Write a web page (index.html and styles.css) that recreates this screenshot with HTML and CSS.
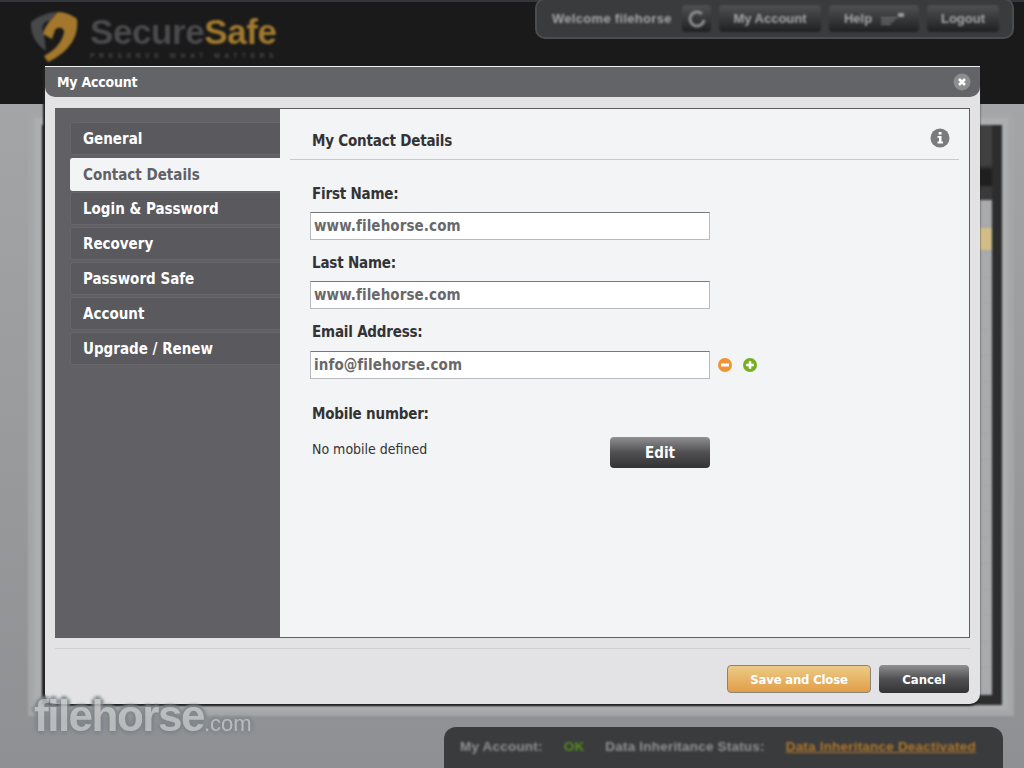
FILE: index.html
```html
<!DOCTYPE html>
<html>
<head>
    <meta charset="utf-8">
    <link rel="stylesheet" href="styles.css">
    <title>SecureSafe</title>
</head>
<body>
<!-- blurred app behind the dialog -->
<div class="app">
    <header class="top">
        <div class="logo">
            <svg class="logo-mark" width="52" height="54" viewBox="0 0 52 54">
                <path d="M3 13C12 6 22 3 30 3L22 12C14 12 13 20 16 26L18 42C9 36 2 26 3 13Z" fill="#47484a"/>
                <path d="M30 3C37 3 44 6 49 10C51 26 43 42 20 53L16 47C28 41 34 32 36 24C37 19 30 17 27 21L24 30L15 25C17 16 24 10 30 3Z" fill="#a4782c"/>
            </svg>
            <div>
                <div class="logo-name">Secure<span>Safe</span></div>
                <div class="logo-tag">PRESERVE WHAT MATTERS</div>
            </div>
        </div>
        <div class="usernav">
            <span class="welcome">Welcome filehorse</span>
            <span class="navbtn nav-refresh">
                <svg width="18" height="18" viewBox="0 0 18 18"><path d="M14 4A7 7 0 1 0 16 10" fill="none" stroke="#8b8c8c" stroke-width="3"/></svg>
            </span>
            <span class="navbtn nav-account">My Account</span>
            <span class="navbtn nav-help">Help
                <svg width="24" height="14" viewBox="0 0 24 14"><path d="M1 6H17M1 9H14M1 12H11" stroke="#77787a" stroke-width="1.4"/><path d="M18 1H24V5H18Z" fill="#9a9b9b"/></svg>
            </span>
            <span class="navbtn nav-logout">Logout</span>
        </div>
    </header>
    <div class="main">
        <div class="frame">
            <div class="frame-dark">
                <div class="frame-list">
                    <div class="frame-row"></div>
                </div>
            </div>
        </div>
    </div>
    <div class="statusbar">
        <span>My Account:</span>
        <span class="ok">OK</span>
        <span>Data Inheritance Status:</span>
        <span class="inherit">Data Inheritance Deactivated</span>
    </div>
</div>

<div class="dialog">
    <div class="dialog-title">
        <span>My Account</span>
        <svg class="close" width="18" height="18" viewBox="0 0 18 18">
            <circle cx="9" cy="9" r="8.5" fill="#8d8d8f"/>
            <path d="M6 6L12 12M12 6L6 12" stroke="#fff" stroke-width="2.6"/>
        </svg>
    </div>
    <div class="dialog-body">
        <nav class="tabs">
            <a class="tab">General</a>
            <a class="tab active">Contact Details</a>
            <a class="tab">Login &amp; Password</a>
            <a class="tab">Recovery</a>
            <a class="tab">Password Safe</a>
            <a class="tab">Account</a>
            <a class="tab">Upgrade / Renew</a>
        </nav>
        <section class="content">
            <div class="content-head">
                <h2>My Contact Details</h2>
                <svg class="info" width="20" height="20" viewBox="0 0 20 20">
                    <circle cx="10" cy="10" r="9.5" fill="#7b7b7d"/>
                    <rect x="8.7" y="4" width="2.8" height="2.6" fill="#fff"/>
                    <path d="M7.5 8H11.5V13.6H13V15.4H7.5V13.6H9V9.8H7.5Z" fill="#fff"/>
                </svg>
            </div>
            <div class="fields">
                <label class="field-label">First Name:</label>
                <input class="field" type="text" value="www.filehorse.com">
                <label class="field-label">Last Name:</label>
                <input class="field" type="text" value="www.filehorse.com">
                <label class="field-label">Email Address:</label>
                <div class="email-row">
                    <input class="field" type="text" value="info@filehorse.com">
                    <svg width="14" height="14" viewBox="0 0 14 14"><circle cx="7" cy="7" r="7" fill="#ee9433"/><rect x="3" y="5.5" width="8" height="3" fill="#fff"/></svg>
                    <svg width="14" height="14" viewBox="0 0 14 14"><circle cx="7" cy="7" r="7" fill="#76ae22"/><path d="M5.7 3.2H8.3V5.7H10.8V8.3H8.3V10.8H5.7V8.3H3.2V5.7H5.7Z" fill="#fff"/></svg>
                </div>
                <label class="field-label mobile-label">Mobile number:</label>
                <div class="mobile-row">
                    <span>No mobile defined</span>
                    <button class="btn btn-dark btn-edit">Edit</button>
                </div>
            </div>
        </section>
    </div>
    <div class="dialog-foot">
        <button class="btn btn-orange">Save and Close</button>
        <button class="btn btn-dark btn-cancel">Cancel</button>
    </div>
</div>

<div class="watermark">filehorse<span>.com</span></div>
</body>
</html>
```

FILE: styles.css
```css
html, body {
    margin: 0;
    height: 100%;
    overflow: hidden;
}

body {
    font-family: "DejaVu Sans", sans-serif;
    font-stretch: condensed;
    background: #919396;
    color: #333;
}

/* app behind the dialog */
.app {
    position: relative;
    width: 1024px;
    height: 768px;
    overflow: hidden;
    display: flex;
    flex-direction: column;
    background: linear-gradient(#a3a5a6 100px, #8e9093);
}

.top {
    height: 104px;
    flex: none;
    box-sizing: border-box;
    background: #1a1a1b;
    border-top: 2px solid #33373b;
    display: flex;
    justify-content: space-between;
    align-items: flex-start;
    padding-left: 28px;
    padding-right: 10px;
}

.logo {
    display: flex;
    gap: 10px;
    padding-top: 7px;
    filter: blur(1px);
}

.logo-name {
    font-family: "Liberation Sans", sans-serif;
    font-weight: bold;
    font-size: 35px;
    line-height: 30px;
    margin-top: 8px;
    color: #4b4b4e;
    letter-spacing: -.4px;
}

.logo-name span {
    color: #a27a2e;
}

.logo-tag {
    font-family: "Liberation Sans", sans-serif;
    font-size: 7px;
    font-weight: bold;
    letter-spacing: 4.4px;
    color: #47474a;
    margin-top: 5px;
    white-space: nowrap;
}

.usernav {
    margin-top: -4px;
    width: 479px;
    height: 41px;
    box-sizing: border-box;
    background: #3a3b3d;
    border: 2px solid #4a4c4e;
    border-radius: 10px;
    display: flex;
    align-items: center;
    padding-left: 15px;
    font-family: "Liberation Sans", sans-serif;
    font-weight: bold;
    font-size: 13px;
    color: #a6a7a7;
}

.usernav > * {
    filter: blur(1px);
}

.welcome {
    width: 130px;
    white-space: nowrap;
    letter-spacing: .3px;
}

.navbtn {
    height: 27px;
    display: flex;
    align-items: center;
    justify-content: center;
    gap: 8px;
    background: linear-gradient(#505152, #1f2021);
    border-radius: 4px;
    margin-right: 8px;
}

.nav-refresh { width: 29px; }
.nav-account { width: 102px; }
.nav-help { width: 90px; }
.nav-logout { width: 72px; }

.main {
    flex: 1;
    padding: 0 10px 0 28px;
}

.frame {
    height: 604px;
    margin-top: 8px;
    box-sizing: border-box;
    background: #adaeaf;
    border: 6px solid #a5a6a7;
    padding: 7px 6px 5px 8px;
    filter: blur(1px);
}

.frame-dark {
    height: 100%;
    box-sizing: border-box;
    background: linear-gradient(#404041 40px, #1f1f20 45px, #1f1f20 60px, #3a3a3b 62px, #2d2d2e);
    border-left: 4px solid #2d2d2e;
    border-right: 10px solid #2d2d2e;
    border-bottom: 10px solid #2d2d2e;
    padding-top: 75px;
}

.frame-list {
    height: 100%;
    padding-top: 28px;
    box-sizing: border-box;
    background: repeating-linear-gradient(#a9aaab 0, #a9aaab 25px, #a0a1a2 26px);
}

.frame-row {
    height: 22px;
    background: #d1bd85;
}

.statusbar {
    position: absolute;
    left: 444px;
    top: 727px;
    width: 559px;
    height: 45px;
    box-sizing: border-box;
    background: #3a3b3d;
    border-radius: 12px 12px 0 0;
    padding: 12px 0 0 16px;
    display: flex;
    gap: 21px;
    font-family: "Liberation Sans", sans-serif;
    font-weight: bold;
    font-size: 13.5px;
    letter-spacing: .2px;
    color: #909192;
}

.statusbar span {
    filter: blur(1px);
    white-space: nowrap;
}

.ok { color: #568a1d; }
.inherit { color: #b1772a; text-decoration: underline; }

.watermark {
    position: absolute;
    left: 34px;
    top: 691px;
    font-family: "Liberation Sans", sans-serif;
    font-size: 44px;
    font-weight: bold;
    letter-spacing: -1.5px;
    color: #c1c2c4;
    text-shadow: 0 3px 3px #7d858a, 3px 0 3px #7d858a, -3px 0 3px #7d858a, 0 -3px 3px #7d858a;
    opacity: .85;
}

.watermark span {
    font-size: 22px;
    font-weight: normal;
    letter-spacing: 0;
}

/* dialog */
.dialog {
    position: absolute;
    left: 45px;
    top: 66px;
    width: 935px;
    height: 638px;
    background: #e3e3e5;
    border-radius: 0 0 10px 10px;
    box-shadow: -1px 1px 2px 1px #222;
    display: flex;
    flex-direction: column;
}

.dialog-title {
    height: 31px;
    flex: none;
    box-sizing: border-box;
    background: #636467;
    border-top: 1px solid #f0f0f0;
    border-radius: 0 0 10px 10px;
    display: flex;
    align-items: center;
    justify-content: space-between;
    padding: 0 9px 0 12px;
    color: #fff;
    font-weight: bold;
    font-size: 14px;
    letter-spacing: -.2px;
}

.dialog-body {
    height: 530px;
    flex: none;
    margin: 11px 10px 0 10px;
    display: flex;
    background: #f3f4f6;
    border: 1px solid #5e5e62;
    border-left: 0;
    box-sizing: border-box;
}

.tabs {
    width: 225px;
    flex: none;
    box-sizing: border-box;
    background: #616065;
    padding-top: 13px;
    padding-left: 15px;
    display: flex;
    flex-direction: column;
    gap: 2px;
}

.tab {
    height: 33px;
    box-sizing: border-box;
    display: flex;
    align-items: center;
    padding-left: 12px;
    background: #5a595e;
    border: 1px solid #67666b;
    border-right: 0;
    border-radius: 3px 0 0 3px;
    color: #fff;
    font-weight: bold;
    font-size: 15px;
    white-space: nowrap;
}

.tab.active {
    background: #f3f4f6;
    color: #616065;
    border-color: #f3f4f6;
    margin-top: 1px;
    margin-bottom: -1px;
}

.content {
    flex: 1;
    padding: 0 10px;
    min-width: 0;
}

.content-head {
    height: 51px;
    box-sizing: border-box;
    border-bottom: 1px solid #c5cacb;
    display: flex;
    justify-content: space-between;
    padding: 20px 9px 0 22px;
}

.content-head h2 {
    margin: 0;
    font-size: 15px;
    line-height: 24px;
    letter-spacing: -.2px;
    color: #333;
}

.info {
    margin-top: -1px;
}

.fields {
    padding-left: 20px;
    display: flex;
    flex-direction: column;
    align-items: flex-start;
}

.field-label {
    font-size: 15px;
    font-weight: bold;
    line-height: 20px;
    letter-spacing: -.2px;
    margin-left: 2px;
    margin-top: 24px;
    margin-bottom: 8px;
}

.field-label ~ .field-label {
    margin-top: 13px;
}

.field {
    width: 400px;
    height: 28px;
    box-sizing: border-box;
    border: 1px solid #b9babd;
    border-top-color: #77787a;
    background: #fff;
    padding: 0 3px;
    font-family: inherit;
    font-stretch: condensed;
    font-size: 15px;
    font-weight: bold;
    letter-spacing: .1px;
    color: #68686b;
    outline: 0;
}

.email-row {
    display: flex;
    align-items: center;
    gap: 11px;
    margin-top: 1px;
}

.email-row .field {
    margin-right: -3px;
}

.field-label.mobile-label {
    margin-top: 25px;
    margin-bottom: 0;
}

.mobile-row {
    width: 400px;
    display: flex;
    justify-content: space-between;
    margin-top: 14px;
    padding-left: 2px;
    box-sizing: border-box;
    font-size: 14px;
    line-height: 22px;
}

.btn {
    border: 0;
    border-radius: 4px;
    color: #fff;
    font-family: inherit;
    font-stretch: condensed;
    font-weight: bold;
    font-size: 13px;
    padding: 0;
}

.btn-dark {
    background: linear-gradient(#909092, #505052 50%, #333335);
}

.btn-edit {
    width: 100px;
    height: 31px;
    font-size: 15px;
    margin-top: -1px;
}

.dialog-foot {
    margin: 10px 10px 0 10px;
    border-top: 1px solid #cfd0d2;
    display: flex;
    justify-content: flex-end;
    gap: 8px;
    padding: 16px 1px 0 0;
}

.btn-orange {
    width: 144px;
    height: 28px;
    box-sizing: border-box;
    border: 1px solid #8b8378;
    background: linear-gradient(#eccb86, #e29e47);
    letter-spacing: -.2px;
}

.btn-cancel {
    width: 90px;
    height: 28px;
}
```
